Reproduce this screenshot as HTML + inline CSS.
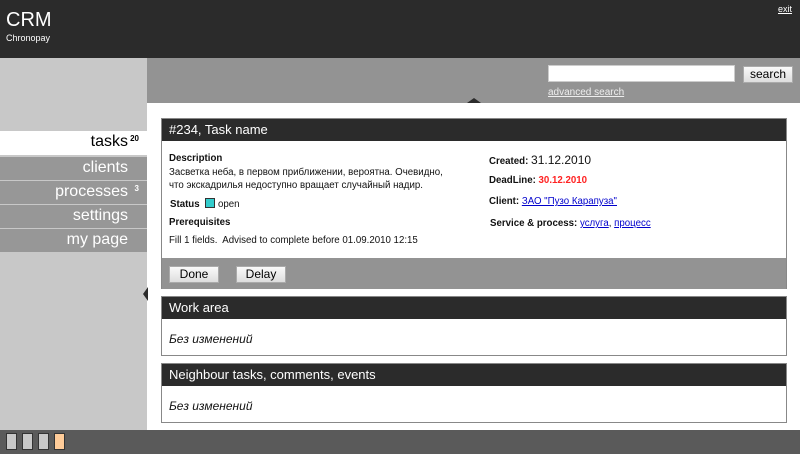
<!DOCTYPE html>
<html><head><meta charset="utf-8"><style>
*{margin:0;padding:0;box-sizing:border-box}
body{width:800px;height:454px;overflow:hidden;font-family:"Liberation Sans",Arial,sans-serif;background:#fff;position:relative}
.a{position:absolute}
#hdr{left:0;top:0;width:800px;height:58px;background:#2b2b2b;color:#fff}
#side{left:0;top:58px;width:147px;height:372px;background:#c8c8c8}
#bar{left:147px;top:58px;width:653px;height:45px;background:#939393}
#foot{left:0;top:430px;width:800px;height:24px;background:#5a5a5a}
.mi{left:0;width:147px;height:23px;background:#979797;color:#fff;font-size:16px;text-align:right;padding-right:19px;line-height:22px}
.mi sup{font-size:8px;font-weight:bold;position:absolute;right:8px;top:-3px}
.box{left:161px;width:626px;border:1px solid #888;background:#fff}
.bh{background:#2b2b2b;color:#fff;font-size:13px;height:22px;line-height:22px;padding-left:7px}
.sm{font-size:9.7px;color:#111}
b{font-weight:bold}
.btn{background:linear-gradient(#fafafa,#ddd);border:1px solid #aaa;font-size:12px;height:17px;line-height:15px;text-align:center}
a{color:#00c;text-decoration:underline}
</style></head><body>
<div id="hdr" class="a">
<div class="a" style="left:6px;top:9px;font-size:20px">CRM</div>
<div class="a" style="left:6px;top:33px;font-size:9px">Chronopay</div>
<div class="a" style="left:778px;top:4px;font-size:9px;text-decoration:underline">exit</div>
</div>
<div id="side" class="a"></div>
<div id="bar" class="a">
<div class="a" style="left:401px;top:7px;width:187px;height:17px;background:#fff;border:1px solid #ccc"></div>
<div class="a btn" style="left:596px;top:8px;width:50px;height:17px;font-size:12px">search</div>
<div class="a" style="left:401px;top:29px;font-size:10px;color:#eee;text-decoration:underline">advanced search</div>
<div class="a" style="left:320px;top:40px;width:0;height:0;border-left:7px solid transparent;border-right:7px solid transparent;border-bottom:5px solid #2b2b2b"></div>
</div>
<div class="a mi" style="top:131px;background:#fff;color:#000;height:24px">tasks<sup>20</sup></div>
<div class="a mi" style="top:157px">clients</div>
<div class="a mi" style="top:181px">processes<sup>3</sup></div>
<div class="a mi" style="top:205px">settings</div>
<div class="a mi" style="top:229px">my page</div>
<div class="a" style="left:143px;top:287px;width:0;height:0;border-top:7px solid transparent;border-bottom:7px solid transparent;border-right:5px solid #2b2b2b"></div>

<div class="a box" style="top:118px;height:171px">
<div class="bh">#234, Task name</div>
<div class="a sm" style="left:7px;top:34px"><b>Description</b></div>
<div class="a sm" style="left:7px;top:47px;line-height:13px">Засветка неба, в первом приближении, вероятна. Очевидно,<br>что экскадрилья недоступно вращает случайный надир.</div>
<div class="a sm" style="left:8px;top:79px"><b>Status</b> <span style="display:inline-block;width:10px;height:10px;background:#3cc;border:1px solid #333;vertical-align:-1px;margin-left:3px"></span> open</div>
<div class="a sm" style="left:7px;top:98px"><b>Prerequisites</b></div>
<div class="a sm" style="left:7px;top:116px">Fill 1 fields.&nbsp; Advised to complete before 01.09.2010 12:15</div>
<div class="a sm" style="left:327px;top:34px"><b>Created:</b> <span style="font-size:12px">31.12.2010</span></div>
<div class="a sm" style="left:327px;top:56px"><b>DeadLine:</b> <b style="color:#f22">30.12.2010</b></div>
<div class="a sm" style="left:327px;top:77px"><b>Client:</b> <a>ЗАО "Пузо Карапуза"</a></div>
<div class="a sm" style="left:328px;top:99px"><b>Service &amp; process:</b> <a>услуга</a>, <a>процесс</a></div>
<div class="a" style="left:0;top:139px;width:624px;height:31px;background:#939393">
<div class="a btn" style="left:7px;top:8px;width:50px">Done</div>
<div class="a btn" style="left:74px;top:8px;width:50px">Delay</div>
</div>
</div>
<div class="a box" style="top:296px;height:60px">
<div class="bh">Work area</div>
<div class="a" style="left:7px;top:35px;font-size:12px;font-style:italic;color:#111">Без изменений</div>
</div>
<div class="a box" style="top:363px;height:60px">
<div class="bh">Neighbour tasks, comments, events</div>
<div class="a" style="left:7px;top:35px;font-size:12px;font-style:italic;color:#111">Без изменений</div>
</div>
<div id="foot" class="a">
<div class="a" style="left:6px;top:3px;width:11px;height:17px;background:#c8c8c8;border:1px solid #333"></div>
<div class="a" style="left:22px;top:3px;width:11px;height:17px;background:#c8c8c8;border:1px solid #333"></div>
<div class="a" style="left:38px;top:3px;width:11px;height:17px;background:#c8c8c8;border:1px solid #333"></div>
<div class="a" style="left:54px;top:3px;width:11px;height:17px;background:#fc9;border:1px solid #333"></div>
</div>
</body></html>
